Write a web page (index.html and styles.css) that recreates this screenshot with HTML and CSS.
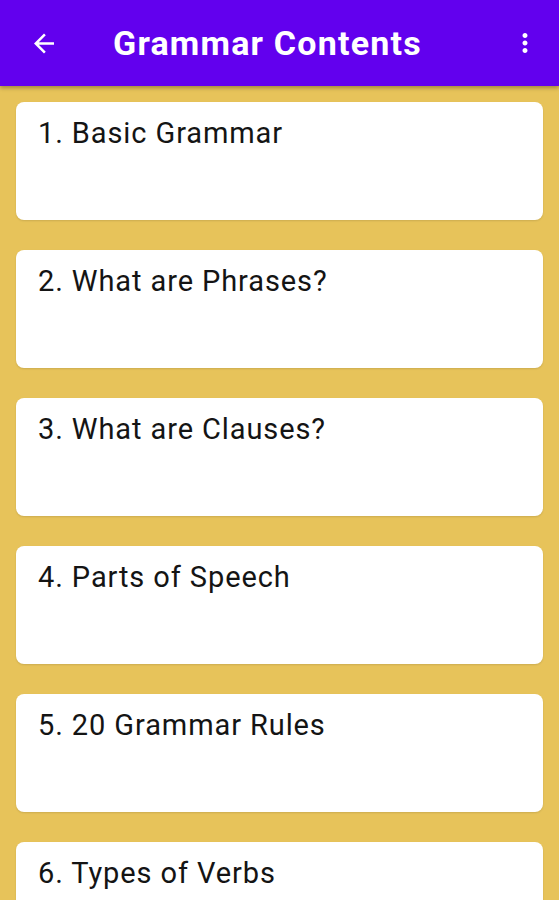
FILE: index.html
```html
<!DOCTYPE html>
<html lang="en">
<head>
  <meta charset="UTF-8">
  <meta name="viewport" content="width=device-width, initial-scale=1.0">
  <title>Grammar Contents</title>
  <link rel="stylesheet" href="styles.css">
</head>
<body>
  <header class="toolbar">
    <span class="nav-btn">
      <svg width="24" height="24" viewBox="0 0 24 24"><path d="M20 11H7.83l5.59-5.59L12 4l-8 8 8 8 1.41-1.41L7.83 13H20v-2z" fill="#fff"/></svg>
    </span>
    <h1 class="title">Grammar Contents</h1>
    <span class="menu-btn">
      <svg width="24" height="24" viewBox="0 0 24 24"><path d="M12 8c1.1 0 2-.9 2-2s-.9-2-2-2-2 .9-2 2 .9 2 2 2zm0 2c-1.1 0-2 .9-2 2s.9 2 2 2 2-.9 2-2-.9-2-2-2zm0 6c-1.1 0-2 .9-2 2s.9 2 2 2 2-.9 2-2-.9-2-2-2z" fill="#fff"/></svg>
    </span>
  </header>

  <main class="list">
    <div class="card">1. Basic Grammar</div>
    <div class="card">2. What are Phrases?</div>
    <div class="card">3. What are Clauses?</div>
    <div class="card">4. Parts of Speech</div>
    <div class="card">5. 20 Grammar Rules</div>
    <div class="card">6. Types of Verbs</div>
  </main>
</body>
</html>
```

FILE: styles.css
```css
body {
  margin: 0;
  height: 900px;
  overflow: hidden;
  font-family: Roboto, "Liberation Sans", sans-serif;
  background: #e7c35a;
}
.toolbar {
  position: relative;
  z-index: 1;
  height: 86px;
  display: flex;
  align-items: center;
  background: #6200ee;
  box-shadow: 0 2px 4px rgba(0,0,0,0.3);
}
.nav-btn {
  width: 30px;
  height: 30px;
  margin-left: 29px;
  display: flex;
  align-items: center;
  justify-content: center;
}
.nav-btn svg {
  width: 31px;
  height: 31px;
}
.title {
  margin: 0 0 0 54px;
  flex: 1;
  color: #fff;
  font-size: 34px;
  font-weight: 700;
  letter-spacing: 1.2px;
}
.menu-btn {
  width: 30px;
  height: 30px;
  margin-right: 19px;
  display: flex;
  align-items: center;
  justify-content: center;
}
.menu-btn svg {
  width: 30px;
  height: 30px;
}
.list {
  display: flex;
  flex-direction: column;
  gap: 30px;
  padding: 16px 16px 0;
}
.card {
  flex: none;
  height: 118px;
  box-sizing: border-box;
  padding: 14px 22px;
  background: #fff;
  border-radius: 8px;
  box-shadow: 0 1px 2px rgba(0,0,0,0.12);
  color: #141414;
  font-size: 29px;
  letter-spacing: 0.9px;
}
```
